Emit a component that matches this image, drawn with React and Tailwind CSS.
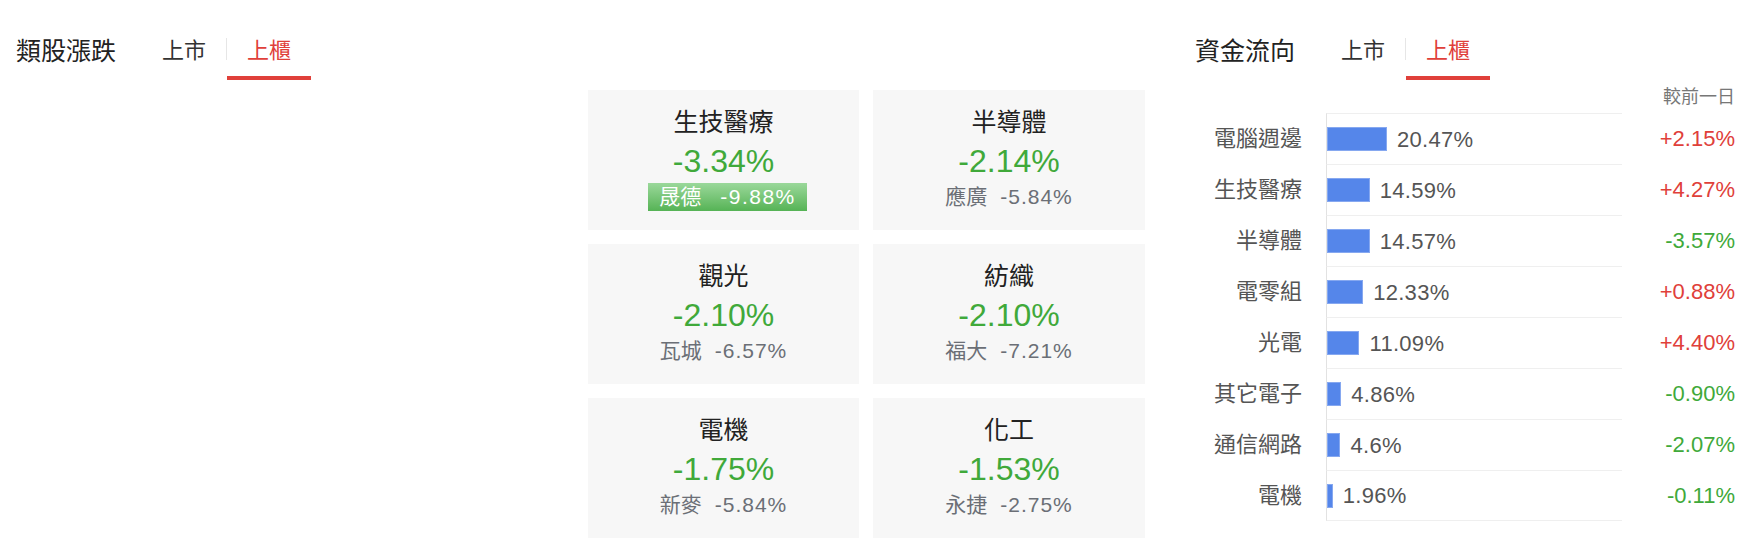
import React from 'react';

const sectors = [
  { name: '生技醫療', pct: '-3.34%', stock: '晟德', chg: '-9.88%', limit: true },
  { name: '半導體', pct: '-2.14%', stock: '應廣', chg: '-5.84%' },
  { name: '觀光', pct: '-2.10%', stock: '瓦城', chg: '-6.57%' },
  { name: '紡織', pct: '-2.10%', stock: '福大', chg: '-7.21%' },
  { name: '電機', pct: '-1.75%', stock: '新麥', chg: '-5.84%' },
  { name: '化工', pct: '-1.53%', stock: '永捷', chg: '-2.75%' },
];

const flows = [
  { name: '電腦週邊', share: 20.47, diff: '+2.15%' },
  { name: '生技醫療', share: 14.59, diff: '+4.27%' },
  { name: '半導體', share: 14.57, diff: '-3.57%' },
  { name: '電零組', share: 12.33, diff: '+0.88%' },
  { name: '光電', share: 11.09, diff: '+4.40%' },
  { name: '其它電子', share: 4.86, diff: '-0.90%' },
  { name: '通信網路', share: 4.6, diff: '-2.07%' },
  { name: '電機', share: 1.96, diff: '-0.11%' },
];

function Header({ title }) {
  return (
    <div className="flex h-[80px] items-start">
      <h2 className="mt-[38px] text-[25px] leading-[26px] text-[#222]">{title}</h2>
      <div className="ml-[26px] flex items-start">
        <div className="h-[80px] cursor-pointer border-b-4 border-transparent px-[20px] pt-[39px] text-[22px] leading-[24px] text-[#333]">
          上市
        </div>
        <span className="mt-[38px] h-[22px] w-px bg-[#e6e6e6]" />
        <div className="h-[80px] cursor-pointer border-b-4 border-[#e0403a] px-[20px] pt-[39px] text-[22px] leading-[24px] text-[#e0403a]">
          上櫃
        </div>
      </div>
    </div>
  );
}

function SectorCard({ s }) {
  return (
    <div className="flex h-[140px] flex-col items-center bg-[#f7f7f7] pt-[17px]">
      <div className="text-[25px] leading-[30px] text-[#222]">{s.name}</div>
      <div className="mt-[6px] text-[32px] leading-[36px] text-[#40a93a]">{s.pct}</div>
      {s.limit ? (
        <div className="ml-[8px] mt-[4px] flex h-[28px] items-center gap-[19px] bg-linear-to-b from-[#9ad89a] to-[#55b355] px-[11px] text-[21px] leading-[28px] text-white">
          <span>{s.stock}</span>
          <span className="tracking-[1.5px]">{s.chg}</span>
        </div>
      ) : (
        <div className="mt-[4px] flex h-[28px] items-center gap-[13px] text-[21px] leading-[28px] text-[#6b6f76]">
          <span>{s.stock}</span>
          <span className="tracking-[1px]">{s.chg}</span>
        </div>
      )}
    </div>
  );
}

export default function App() {
  return (
    <div className="flex h-[550px] w-[1752px] bg-white font-['Liberation_Sans','Noto_Sans_CJK_TC',sans-serif]">
      {/* 類股漲跌 */}
      <section className="w-[1160px] pl-[16px]">
        <Header title="類股漲跌" />
        <div className="ml-[572px] mt-[10px] grid grid-cols-[271px_272px] gap-x-[14px] gap-y-[14px]">
          {sectors.map((s) => (
            <SectorCard key={s.name} s={s} />
          ))}
        </div>
      </section>

      {/* 資金流向 */}
      <section className="w-[592px] pl-[35px] pr-[17px]">
        <Header title="資金流向" />
        <div className="mt-[6px] text-right text-[18px] leading-[22px] text-[#777]">較前一日</div>
        <div className="mt-[5px] flex flex-col">
          {flows.map((f, i) => (
            <div key={f.name} className="flex h-[51px] items-stretch">
              <div className="flex w-[107px] items-center justify-end text-[22px] text-[#555]">{f.name}</div>
              <div
                className={`ml-[24px] flex w-[296px] items-center border-l border-t border-l-[#e2e2e2] border-t-[#efefef] ${
                  i === flows.length - 1 ? 'border-b border-b-[#efefef]' : ''
                }`}
              >
                <div
                  className="h-[24px] border border-[#86a8f0] bg-[#5586ea]"
                  style={{ width: `${Math.max(f.share * 2.93, 5)}px` }}
                />
                <span className="ml-[10px] text-[22px] tracking-[0.3px] text-[#555]">{f.share}%</span>
              </div>
              <div
                className={`flex flex-1 items-center justify-end text-[22px] ${
                  f.diff.startsWith('+') ? 'text-[#e0403a]' : 'text-[#40a93a]'
                }`}
              >
                {f.diff}
              </div>
            </div>
          ))}
        </div>
      </section>
    </div>
  );
}
